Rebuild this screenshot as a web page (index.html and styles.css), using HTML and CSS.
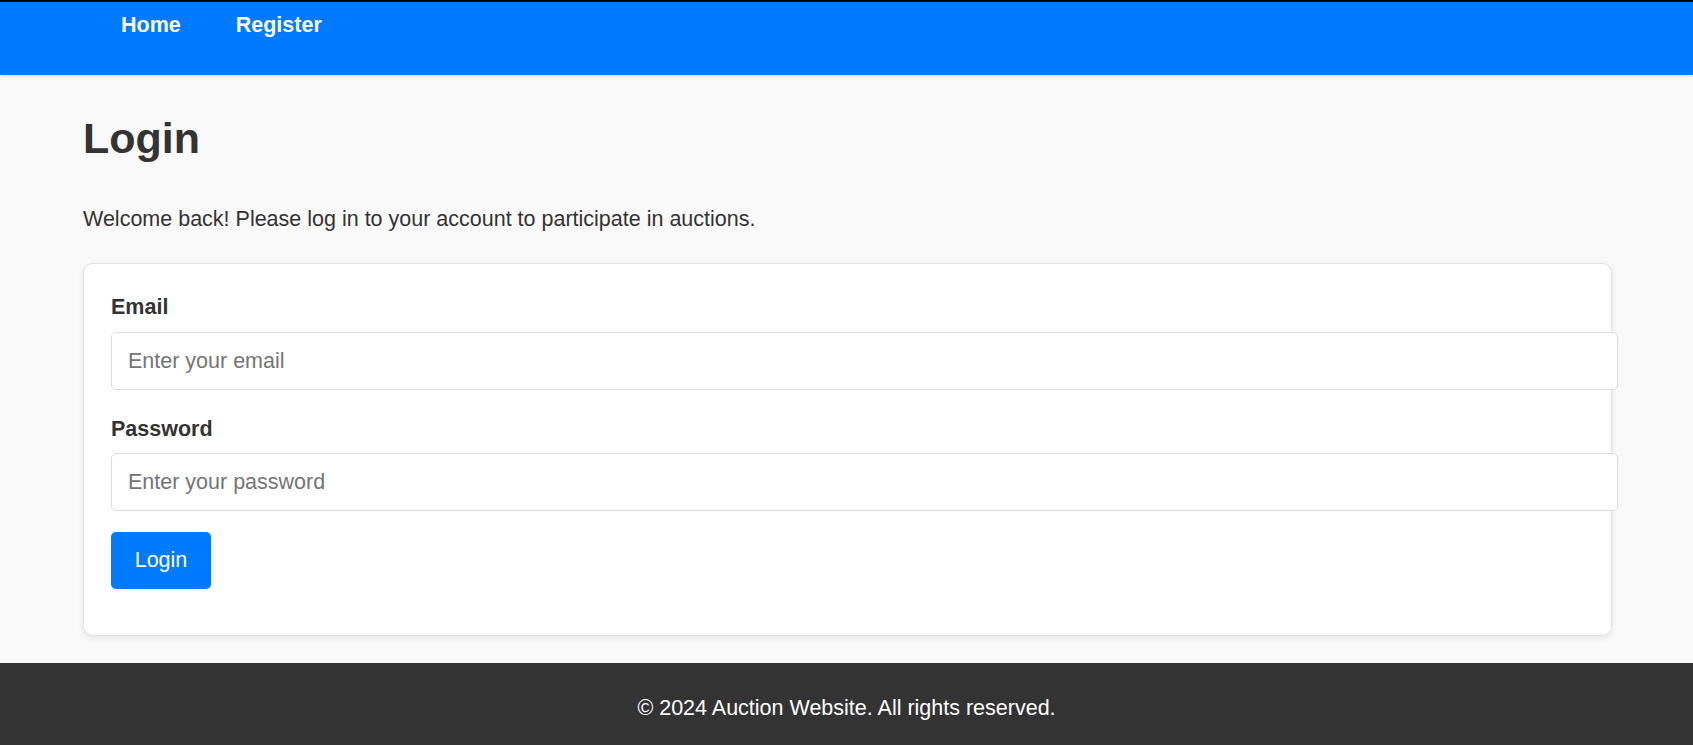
FILE: index.html
```html
<!DOCTYPE html>
<html lang="en">
<head>
<meta charset="utf-8">
<title>Login - Auction Website</title>
<link rel="stylesheet" href="styles.css">
</head>
<body>
<header class="site-header">
  <nav class="nav">
    <a class="nav-link" href="#">Home</a>
    <a class="nav-link" href="#">Register</a>
  </nav>
</header>
<main class="main">
  <h1 class="title">Login</h1>
  <p class="intro">Welcome back! Please log in to your account to participate in auctions.</p>
  <form class="card">
    <label class="label" for="email">Email</label>
    <input class="input" id="email" type="email" placeholder="Enter your email">
    <label class="label label-gap" for="password">Password</label>
    <input class="input" id="password" type="password" placeholder="Enter your password">
    <button class="btn" type="button">Login</button>
  </form>
</main>
<footer class="footer">
  <p class="footer-text">&copy; 2024 Auction Website. All rights reserved.</p>
</footer>
</body>
</html>
```
FILE: styles.css
```css
html, body {
  margin: 0;
  padding: 0;
}
body {
  font-family: "Liberation Sans", Arial, sans-serif;
  color: #333;
  background: #f9f9f9;
}
.site-header {
  border-top: 2px solid #000;
  background: #007bff;
  height: 73px;
  box-shadow: 0 1px 3px rgba(0,0,0,0.15);
}
.nav {
  display: flex;
  gap: 55px;
  padding: 12px 0 0 121px;
}
.nav-link {
  color: #fff;
  font-weight: bold;
  font-size: 21.5px;
  text-decoration: none;
  line-height: 23px;
}
.main {
  padding: 38px 81px 0 83px;
}
.title {
  margin: 0;
  font-size: 43px;
  line-height: 50px;
  font-weight: bold;
}
.intro {
  margin: 45px 0 0;
  font-size: 21.5px;
  line-height: 23px;
}
.card {
  margin: 32px 0 0;
  background: #fff;
  border: 1px solid #e2e2e2;
  border-radius: 10px;
  box-shadow: 0 2px 6px rgba(0,0,0,0.08);
  padding: 32px 27px 46px;
  display: flex;
  flex-direction: column;
  align-items: flex-start;
}
.label {
  font-weight: bold;
  font-size: 21.5px;
  line-height: 23px;
  margin-bottom: 13px;
}
.label-gap {
  margin-top: 28px;
  margin-bottom: 12px;
}
.input {
  box-sizing: content-box;
  width: 100%;
  height: 24px;
  padding: 16px;
  border: 1px solid #ddd;
  border-radius: 5px;
  font-family: inherit;
  font-size: 21.5px;
  color: #333;
  background: #fff;
  margin: 0;
  outline: none;
}
.input::placeholder {
  color: #757575;
}
.btn {
  margin-top: 21px;
  width: 100px;
  height: 57px;
  border: none;
  border-radius: 5px;
  background: #007bff;
  color: #fff;
  font-family: inherit;
  font-size: 21.5px;
  padding: 0;
  cursor: pointer;
}
.footer {
  margin-top: 27px;
  background: #333;
  color: #fff;
  padding: 34px 0;
  text-align: center;
}
.footer-text {
  margin: 0;
  font-size: 21.5px;
  line-height: 23px;
}
```
